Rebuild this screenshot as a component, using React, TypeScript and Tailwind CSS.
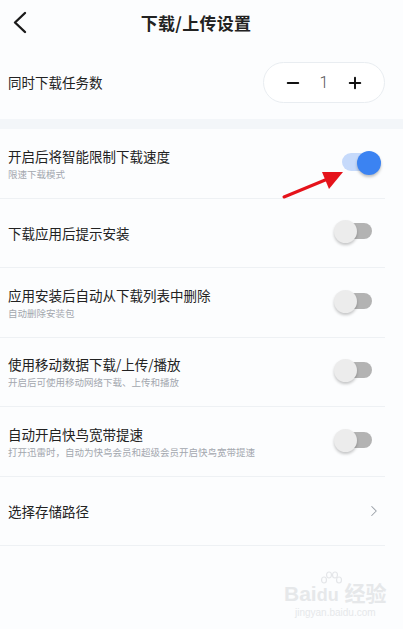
import { ChevronRight, Minus, Plus } from 'lucide-react';

type Item = { title: string; sub?: string; on?: boolean; link?: boolean };

const items: Item[] = [
  { title: '开启后将智能限制下载速度', sub: '限速下载模式', on: true },
  { title: '下载应用后提示安装', on: false },
  { title: '应用安装后自动从下载列表中删除', sub: '自动删除安装包', on: false },
  { title: '使用移动数据下载/上传/播放', sub: '开启后可使用移动网络下载、上传和播放', on: false },
  { title: '自动开启快鸟宽带提速', sub: '打开迅雷时，自动为快鸟会员和超级会员开启快鸟宽带提速', on: false },
  { title: '选择存储路径', link: true },
];

function Toggle({ on }: { on?: boolean }) {
  if (on) {
    return (
      <div className="relative h-[25px] w-[39px]">
        <div className="absolute left-0 top-[2px] h-[18px] w-[28px] rounded-full bg-[#c6dafb]" />
        <div className="absolute right-0 top-0 h-[24px] w-[24px] rounded-full bg-[#3b83f2] shadow-[0_2px_3px_rgba(0,0,0,0.25)]" />
      </div>
    );
  }
  return (
    <div className="relative mr-[9px] h-[25px] w-[38px]">
      <div className="absolute right-0 top-[3px] h-[16px] w-[26px] rounded-full bg-[#b3b3b3]" />
      <div className="absolute left-0 top-0 h-[23px] w-[23px] rounded-full bg-[#ececec] shadow-[0_2px_3px_rgba(0,0,0,0.22)]" />
    </div>
  );
}

export default function App() {
  return (
    <div
      className="relative h-[629px] w-[403px] overflow-hidden bg-[#fcfdfe] text-[#222]"
      style={{ fontFamily: '"Noto Sans CJK SC", "Noto Sans", sans-serif' }}
    >
      {/* Header */}
      <div className="relative flex h-[46px] items-center justify-center pr-[11px]">
        <svg className="absolute left-0 top-0" width="40" height="46" viewBox="0 0 40 46">
          <polyline points="25,13 15,22.5 25,32" fill="none" stroke="#1a1a1a" strokeWidth="2.4" strokeLinecap="round" strokeLinejoin="round" />
        </svg>
        <h1 className="text-[17px] font-bold tracking-[0.3px]">下载/上传设置</h1>
      </div>

      {/* Task count */}
      <div className="flex h-[73px] items-center justify-between pl-2 pr-[18px]">
        <span className="text-[13.5px]">同时下载任务数</span>
        <div className="flex h-[41px] w-[122px] items-center justify-between rounded-full border border-[#e9edf1] bg-white px-[20px]">
          <Minus className="h-[18px] w-[18px] text-[#111]" strokeWidth={2.6} />
          <span className="text-[16px] font-light text-[#555]" style={{ fontFamily: 'Roboto, sans-serif' }}>1</span>
          <Plus className="h-[18px] w-[18px] text-[#111]" strokeWidth={2.6} />
        </div>
      </div>

      <div className="h-[10px] bg-[#f3f6f9]" />

      {/* Settings list */}
      <div className="pr-[18px]">
        {items.map((it) => (
          <div
            key={it.title}
            className="flex h-[69.5px] items-center justify-between border-b border-[#eef1f4] pl-2 pr-[4px]"
          >
            <div className="flex flex-col">
              <span className="text-[13.5px] leading-[20px]">{it.title}</span>
              {it.sub && <span className="mt-[1px] text-[9.5px] leading-[14px] text-[#a3a7ae]">{it.sub}</span>}
            </div>
            {it.link ? (
              <ChevronRight className="mr-[-2px] h-[18px] w-[18px] text-[#9aa0a8]" strokeWidth={1.4} />
            ) : (
              <Toggle on={it.on} />
            )}
          </div>
        ))}
      </div>

      {/* Annotation arrow */}
      <svg className="absolute left-0 top-0" width="403" height="629" viewBox="0 0 403 629">
        <line x1="284" y1="197" x2="330" y2="178" stroke="#e5131b" strokeWidth="3" strokeLinecap="round" />
        <polygon points="343,172 322,172 329,189" fill="#e5131b" />
      </svg>

      {/* Watermark */}
      <svg className="absolute left-[318px] top-[571px]" width="26" height="18" viewBox="0 0 26 18">
        <g fill="none" stroke="#e4e6e9" strokeWidth="1.2">
          <ellipse cx="6" cy="9" rx="2.5" ry="3" />
          <ellipse cx="11" cy="4" rx="2.5" ry="3" />
          <ellipse cx="17" cy="4" rx="2.5" ry="3" />
          <ellipse cx="21" cy="9" rx="2.5" ry="3" />
        </g>
      </svg>
      <div className="absolute left-[284px] top-[582px] flex flex-col items-center text-[#e6e8ea]">
        <span className="text-[21px] font-bold leading-[24px]" style={{ fontFamily: '"Liberation Sans", "Noto Sans CJK SC", sans-serif' }}>
          Bai<span className="text-[18px]">du</span> 经验
        </span>
        <span className="text-[10px] leading-[12px]" style={{ fontFamily: '"Liberation Sans", sans-serif' }}>jingyan.baidu.com</span>
      </div>
    </div>
  );
}
